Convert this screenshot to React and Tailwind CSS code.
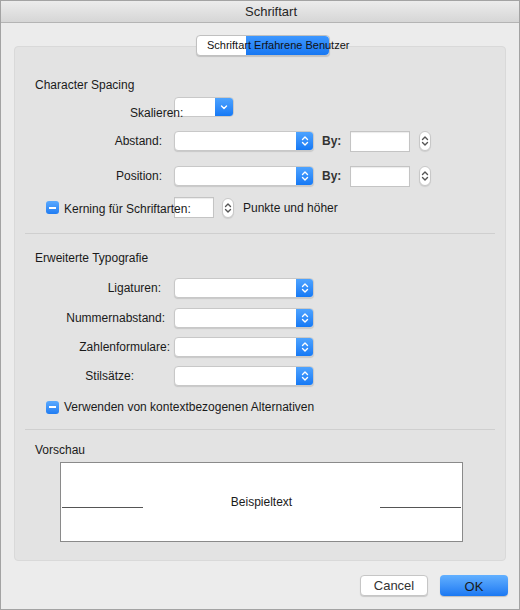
import React from 'react';

// Blauer Dropdown-Pfeil (Doppelpfeil)
function UpDown({ color = 'white' }) {
  return (
    <svg width="8" height="12" viewBox="0 0 8 12" fill="none" stroke={color} strokeWidth="1.4" strokeLinecap="round" strokeLinejoin="round">
      <path d="M1.5 4.5 L4 2 L6.5 4.5" />
      <path d="M1.5 7.5 L4 10 L6.5 7.5" />
    </svg>
  );
}

function Select({ w = 'w-[140px]' }) {
  return (
    <div className={`${w} h-[20px] flex bg-white border border-[#c8c8c8] rounded-[4px] shadow-[0_1px_1px_rgba(0,0,0,0.12)] overflow-hidden`}>
      <div className="flex-1" />
      <div className="w-[17px] bg-gradient-to-b from-[#4da3ff] to-[#1479f5] flex items-center justify-center">
        <UpDown />
      </div>
    </div>
  );
}

function Stepper() {
  return (
    <div className="w-[12px] h-[20px] bg-white border border-[#c8c8c8] rounded-[6px] flex items-center justify-center shadow-[0_1px_1px_rgba(0,0,0,0.1)]">
      <UpDown color="#555" />
    </div>
  );
}

function TextBox({ w }) {
  return <div className={`${w} h-[21px] bg-white border border-[#c4c4c4] shadow-[inset_0_1px_1px_rgba(0,0,0,0.08)]`} />;
}

function CheckMixed() {
  return (
    <div className="w-[13px] h-[13px] rounded-[3px] bg-gradient-to-b from-[#5aaaff] to-[#1f7cf2] flex items-center justify-center shrink-0">
      <div className="w-[7px] h-[2px] bg-white" />
    </div>
  );
}

function Row({ label, labelW, gap, children, mt }) {
  return (
    <div className={`flex items-center h-[20px] ${mt}`}>
      <div className={`${labelW} text-right shrink-0 whitespace-nowrap`}>{label}</div>
      <div className={gap}>{children}</div>
    </div>
  );
}

function SpacingControls() {
  return (
    <div className="flex items-center">
      <Select />
      <span className="ml-[8px] font-bold text-[#333]">By:</span>
      <div className="ml-[9px]"><TextBox w="w-[60px]" /></div>
      <div className="ml-[9px]"><Stepper /></div>
    </div>
  );
}

export default function App() {
  return (
    <div
      className="w-[520px] h-[610px] bg-[#ececec] border border-[#a3a3a3] flex flex-col text-[12px] text-[#1a1a1a] overflow-hidden"
      style={{ fontFamily: '"Liberation Sans", Arial, sans-serif' }}
    >
      {/* Titelleiste */}
      <div className="h-[22px] shrink-0 bg-gradient-to-b from-[#ececec] to-[#d6d6d6] border-b border-[#b4b4b4] flex items-center justify-center pl-[22px] text-[13px] text-[#262626]">
        Schriftart
      </div>

      {/* Inhalt */}
      <div className="relative flex-1 px-[13px] pt-[23px]">
        {/* Tabs */}
        <div className="absolute left-[195px] top-[12px] z-10 flex h-[21px] rounded-[4px] border border-[#c0c0c0] shadow-[0_1px_1px_rgba(0,0,0,0.15)] bg-white">
          <div className="w-[49px]" />
          <div className="w-[83px] bg-gradient-to-b from-[#3d97ff] to-[#1677f2] rounded-r-[4px]" />
          <div className="absolute left-[10px] top-0 h-full flex items-center whitespace-nowrap text-[11px] text-[#111]">
            Schriftart Erfahrene Benutzer
          </div>
        </div>

        {/* Gruppenbox */}
        <div className="h-[515px] bg-[#e3e3e3] border border-[#d9d9d9] rounded-[4px] px-[11px] flex flex-col">
          {/* Character Spacing */}
          <div className="pl-[9px] mt-[31px] leading-[14px]">Character Spacing</div>

          <div className="relative flex items-center h-[20px] mt-[5px]">
            <div className="w-[148px] shrink-0" />
            <div className="w-[60px] h-[20px] flex bg-white border border-[#c8c8c8] rounded-[4px] overflow-hidden">
              <div className="flex-1" />
              <div className="w-[18px] bg-gradient-to-b from-[#4da3ff] to-[#1479f5] flex items-center justify-center">
                <svg width="8" height="6" viewBox="0 0 8 6" fill="none" stroke="white" strokeWidth="1.4" strokeLinecap="round" strokeLinejoin="round">
                  <path d="M1.5 2 L4 4.5 L6.5 2" />
                </svg>
              </div>
            </div>
            <div className="absolute left-[104px] top-[7px]">Skalieren:</div>
          </div>

          <Row label="Abstand:" labelW="w-[136px]" gap="ml-[12px]" mt="mt-[14px]">
            <SpacingControls />
          </Row>

          <Row label="Position:" labelW="w-[136px]" gap="ml-[12px]" mt="mt-[15px]">
            <SpacingControls />
          </Row>

          <div className="flex items-center h-[21px] mt-[11px] pl-[20px]">
            <CheckMixed />
            <div className="relative ml-[5px] w-[111px] h-[21px]">
              <div className="absolute left-[110px] top-0"><TextBox w="w-[40px]" /></div>
              <div className="absolute left-0 top-[3px] whitespace-nowrap">Kerning für Schriftarten:</div>
            </div>
            <div className="ml-[47px]"><Stepper /></div>
            <span className="ml-[9px]">Punkte und höher</span>
          </div>

          <div className="h-px bg-[#cfcfcf] mt-[15px] mx-[-1px]" />

          {/* Erweiterte Typografie */}
          <div className="pl-[9px] mt-[17px] leading-[14px]">Erweiterte Typografie</div>

          <Row label="Ligaturen:" labelW="w-[135px]" gap="ml-[13px]" mt="mt-[13px]">
            <Select />
          </Row>
          <Row label="Nummernabstand:" labelW="w-[139px]" gap="ml-[9px]" mt="mt-[10px]">
            <Select />
          </Row>
          <Row label="Zahlenformulare:" labelW="w-[144px]" gap="ml-[4px]" mt="mt-[9px]">
            <Select />
          </Row>
          <Row label="Stilsätze:" labelW="w-[108px]" gap="ml-[40px]" mt="mt-[9px]">
            <Select />
          </Row>

          <div className="flex items-center mt-[14px] pl-[20px] h-[14px]">
            <CheckMixed />
            <span className="ml-[5px]">Verwenden von kontextbezogenen Alternativen</span>
          </div>

          <div className="h-px bg-[#cfcfcf] mt-[15px] mx-[-1px]" />

          {/* Vorschau */}
          <div className="pl-[9px] mt-[13px] leading-[14px]">Vorschau</div>

          <div className="ml-[34px] mt-[5px] w-[403px] h-[80px] bg-white border border-[#8a8a8a] flex items-center">
            <div className="w-[81px] h-px bg-[#555] mt-[11px] ml-[1px]" />
            <div className="flex-1 text-center text-[#1a1a1a]">Beispieltext</div>
            <div className="w-[81px] h-px bg-[#555] mt-[11px] mr-[1px]" />
          </div>
        </div>

        {/* Buttons */}
        <div className="flex justify-end gap-[12px] mt-[14px] mr-[-2px] text-[13px]">
          <div className="w-[68px] h-[21px] bg-white border border-[#c6c6c6] rounded-[4px] shadow-[0_1px_1px_rgba(0,0,0,0.15)] flex items-center justify-center text-[#333]">
            Cancel
          </div>
          <div className="w-[68px] h-[21px] bg-gradient-to-b from-[#62b0ff] to-[#1a78f2] rounded-[4px] shadow-[0_1px_1px_rgba(0,0,0,0.2)] flex items-center justify-center text-[#1a1a1a] pt-[3px]">
            OK
          </div>
        </div>
      </div>
    </div>
  );
}
